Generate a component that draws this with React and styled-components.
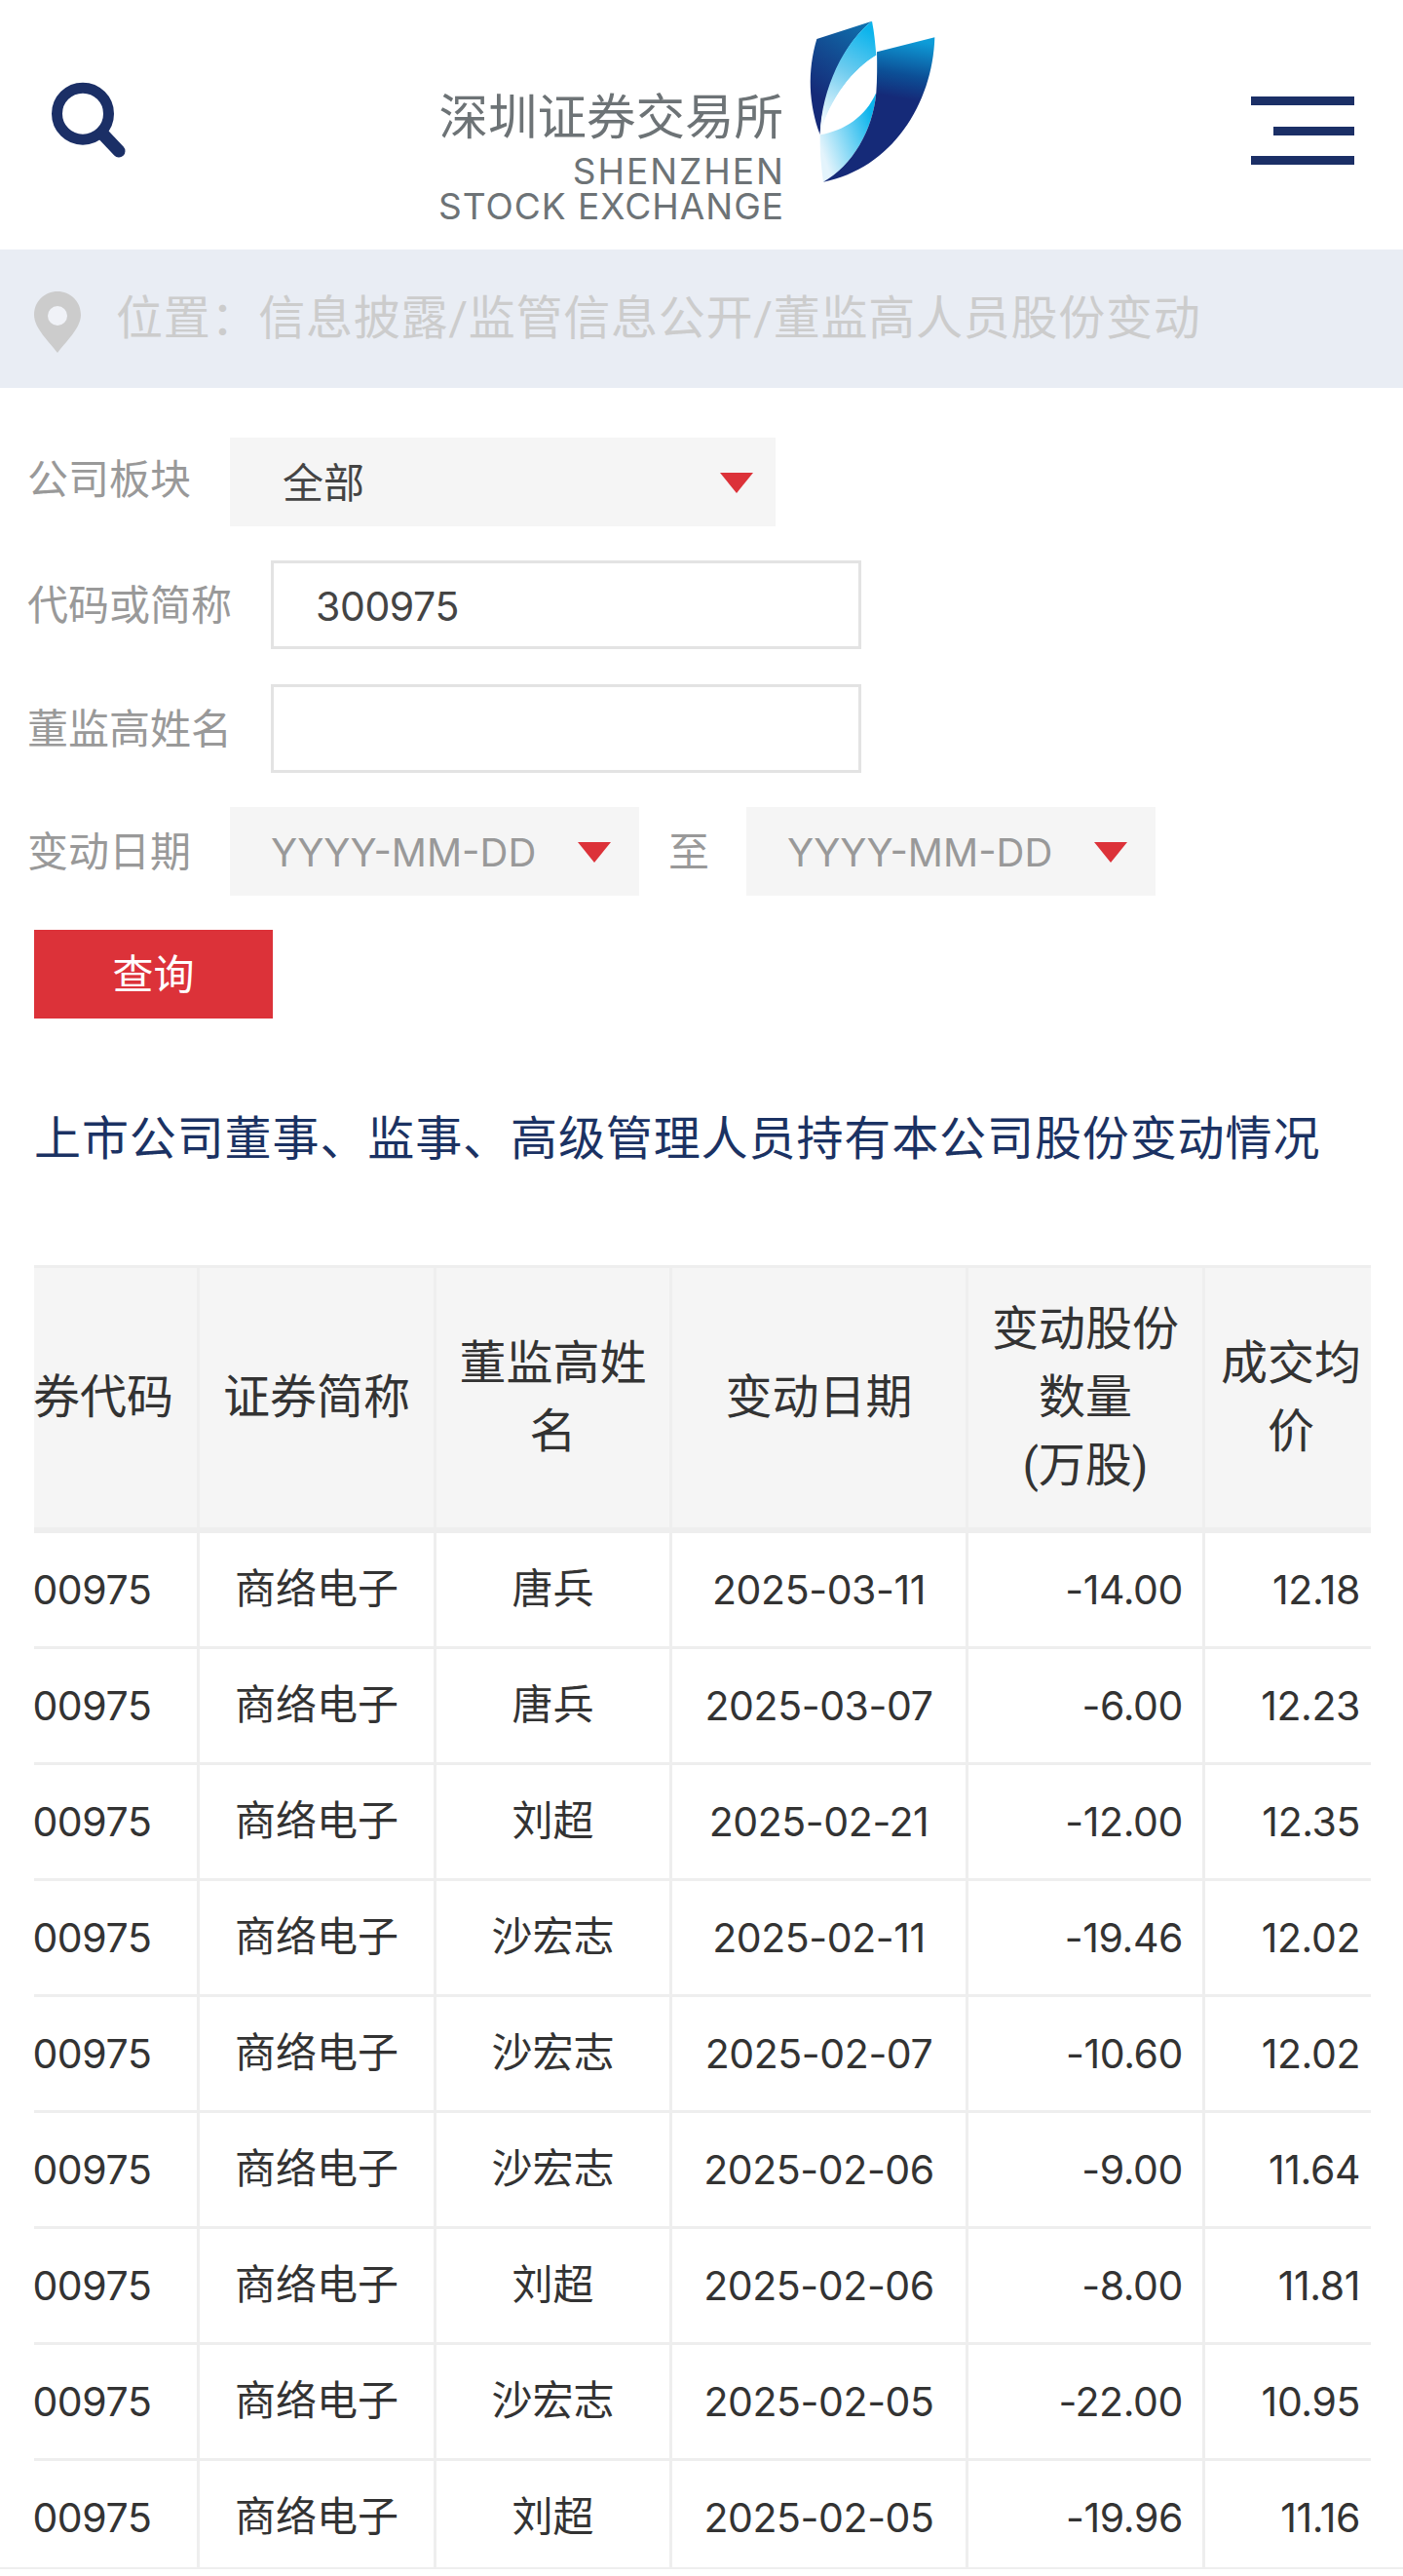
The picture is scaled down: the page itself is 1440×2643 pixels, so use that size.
import React from "react";
import styled, { createGlobalStyle } from "styled-components";

const FONT = `Roboto, "Noto Sans CJK SC", sans-serif`;
const NUM = `Inter, Roboto, sans-serif`;

const Global = createGlobalStyle`
  html, body { margin: 0; padding: 0; background: #fff; }
  body { font-family: ${FONT}; }
  * { box-sizing: border-box; }
`;

const Page = styled.div`
  width: 1440px;
  height: 2643px;
  background: #fff;
  overflow: hidden;
`;

const Header = styled.header`
  height: 256px;
  display: flex;
  align-items: flex-start;
  padding: 0 50px 0 45px;
`;

const SearchIcon = styled.svg`
  width: 90px;
  height: 90px;
  margin-top: 80px;
  flex: none;
`;

const Logo = styled.div`
  display: flex;
  align-items: flex-start;
  gap: 16px;
  margin: 10px 0 0 319px;
`;

const LogoText = styled.div`
  width: 350px;
  padding-top: 81px;
  display: flex;
  flex-direction: column;
  align-items: flex-end;
  color: #6d7376;
  white-space: nowrap;
`;

const LogoCn = styled.div`
  font: 400 50.5px/50px "Noto Sans CJK SC", sans-serif;
  margin-bottom: 17px;
`;

const LogoEn = styled.div`
  font: 400 37px/36px Inter, sans-serif;
  letter-spacing: ${(p) => p.$spacing}px;
  margin-right: -${(p) => p.$spacing}px;
`;

const Mark = styled.svg`
  width: 150px;
  height: 190px;
  flex: none;
`;

const Burger = styled.div`
  margin: 99px 0 0 auto;
  width: 106px;
  display: flex;
  flex-direction: column;
  align-items: flex-end;
  gap: 21.5px;
`;

const BurgerBar = styled.span`
  display: block;
  height: 9px;
  width: ${(p) => p.$width}px;
  background: #1b2f66;
`;

const Crumb = styled.nav`
  height: 142px;
  background: #e9edf4;
  display: flex;
  align-items: center;
  padding-left: 35px;
  gap: 36px;
  color: #cccccc;
  font-size: 48px;
  line-height: 60px;
  letter-spacing: 0.75px;
`;

const Pin = styled.svg`
  width: 48px;
  height: 63px;
  flex: none;
  margin-top: 7px;
`;

const Main = styled.main`
  height: 2238px;
  overflow: hidden;
  border-bottom: 2px solid #eeeeee;
`;

const Form = styled.div`
  padding: 51px 0 0 28px;
  display: flex;
  flex-direction: column;
  gap: 35.25px;
  align-items: flex-start;
`;

const Row = styled.div`
  display: flex;
  align-items: center;
  height: 91px;
`;

const Label = styled.label`
  font-size: 42px;
  line-height: 60px;
  color: #999999;
  margin-right: 40px;
  margin-top: ${(p) => (p.$lift ? 0 : 3)}px;
  margin-bottom: ${(p) => p.$lift || 0}px;
  white-space: nowrap;
`;

const Select = styled.div`
  position: relative;
  height: 91px;
  width: ${(p) => p.$width}px;
  background: #f5f5f5;
  padding-left: ${(p) => p.$pad}px;
  padding-top: ${(p) => (p.$placeholder ? 3 : 0)}px;
  padding-bottom: ${(p) => (p.$placeholder ? 0 : 5)}px;
  display: flex;
  align-items: center;
  font-family: ${(p) => (p.$placeholder ? NUM : FONT)};
  font-size: ${(p) => (p.$placeholder ? 40 : 42)}px;
  color: ${(p) => (p.$placeholder ? "#999999" : "#444444")};
`;

const Arrow = styled.span`
  position: absolute;
  right: ${(p) => p.$right}px;
  top: 36px;
  width: 0;
  height: 0;
  border-left: 17px solid transparent;
  border-right: 17px solid transparent;
  border-top: 21px solid #dc3239;
`;

const TextInput = styled.div`
  width: 606px;
  height: 91px;
  border: 3px solid #e3e3e3;
  background: #fff;
  padding: 3px 0 0 43px;
  display: flex;
  align-items: center;
  font-family: ${NUM};
  font-size: 41px;
  letter-spacing: -0.4px;
  color: #444444;
`;

const To = styled.span`
  margin: 3px 38px 0 30px;
  font-size: 42px;
  line-height: 60px;
  color: #999999;
`;

const Button = styled.button`
  width: 245px;
  height: 91px;
  margin-left: 7px;
  padding: 0 0 6px;
  border: 0;
  background: #dc3239;
  color: #fff;
  font-family: ${FONT};
  font-size: 42px;
`;

const Title = styled.h2`
  margin: 89px 0 94px 35px;
  font-size: 48px;
  line-height: 70px;
  font-weight: 400;
  letter-spacing: 0.9px;
  color: #1b3263;
  white-space: nowrap;
`;

const TableClip = styled.div`
  margin-left: 35px;
  width: 1372px;
  overflow: hidden;
`;

const Table = styled.table`
  table-layout: fixed;
  width: 1454px;
  margin-left: -73px;
  border-collapse: separate;
  border-spacing: 0;
`;

const HeadCell = styled.th`
  height: 275px;
  padding: 0 16px;
  background: #f5f5f5;
  border-top: 3px solid #eeeeee;
  border-bottom: 6px solid #eeeeee;
  border-right: 3px solid #eeeeee;
  font-size: 48px;
  line-height: 70px;
  font-weight: 400;
  color: #333333;
  text-align: center;
  vertical-align: middle;
  white-space: pre-line;
`;

const Cell = styled.td`
  height: 119px;
  padding: 0 ${(p) => (p.$right ? p.$right : 10)}px 0 10px;
  border-right: 3px solid #eeeeee;
  border-bottom: 3px solid #eeeeee;
  font-family: ${(p) => (p.$num ? NUM : FONT)};
  font-size: ${(p) => (p.$num ? 41 : 42)}px;
  letter-spacing: ${(p) => (p.$num ? -0.4 : 0)}px;
  line-height: 60px;
  color: #333333;
  text-align: ${(p) => (p.$right ? "right" : "center")};
  vertical-align: middle;
  white-space: nowrap;
`;

const widths = [243, 243, 242, 304, 243, 179];
const heads = ["证券代码", "证券简称", "董监高姓名", "变动日期", "变动股份\n数量\n(万股)", "成交均价"];
const rows = [
  ["唐兵", "2025-03-11", "-14.00", "12.18"],
  ["唐兵", "2025-03-07", "-6.00", "12.23"],
  ["刘超", "2025-02-21", "-12.00", "12.35"],
  ["沙宏志", "2025-02-11", "-19.46", "12.02"],
  ["沙宏志", "2025-02-07", "-10.60", "12.02"],
  ["沙宏志", "2025-02-06", "-9.00", "11.64"],
  ["刘超", "2025-02-06", "-8.00", "11.81"],
  ["沙宏志", "2025-02-05", "-22.00", "10.95"],
  ["刘超", "2025-02-05", "-19.96", "11.16"],
];

function LogoMark() {
  return (
    <Mark viewBox="0 0 450 570">
      <defs>
        <linearGradient id="lg-left" gradientUnits="userSpaceOnUse" x1="200" y1="40" x2="50" y2="260">
          <stop offset="0" stopColor="#0f70ad" />
          <stop offset="0.55" stopColor="#13488f" />
          <stop offset="1" stopColor="#152a78" />
        </linearGradient>
        <linearGradient id="lg-center" gradientUnits="userSpaceOnUse" x1="225" y1="70" x2="70" y2="340">
          <stop offset="0" stopColor="#0cb4ec" />
          <stop offset="0.45" stopColor="#6ccbef" />
          <stop offset="1" stopColor="#f2fafe" />
        </linearGradient>
        <linearGradient id="lg-low" gradientUnits="userSpaceOnUse" x1="65" y1="420" x2="235" y2="360">
          <stop offset="0" stopColor="#e4f4fc" />
          <stop offset="1" stopColor="#0cb4ec" />
        </linearGradient>
        <linearGradient id="lg-right" gradientUnits="userSpaceOnUse" x1="330" y1="90" x2="300" y2="270">
          <stop offset="0" stopColor="#0e9cd8" />
          <stop offset="0.6" stopColor="#0c4f96" />
          <stop offset="1" stopColor="#152a78" />
        </linearGradient>
      </defs>
      <path d="M55 90 L225 35 C150 90 75 230 65 385 C30 290 25 190 55 90 Z" fill="url(#lg-left)" />
      <path d="M225 35 C232 70 235 105 238 140 C170 180 95 270 65 385 C70 240 140 100 225 35 Z" fill="url(#lg-center)" />
      <path d="M65 385 C95 270 170 180 238 140 C240 180 240 220 238 255 C205 330 140 372 65 385 Z" fill="#ffffff" />
      <path d="M65 385 C140 372 205 330 238 255 C228 370 165 480 75 530 C68 480 64 430 65 385 Z" fill="url(#lg-low)" />
      <path d="M240 130 L418 85 C412 290 285 490 75 530 C165 480 228 370 238 255 C241 215 241 170 240 130 Z" fill="url(#lg-right)" />
    </Mark>
  );
}

export default function App() {
  return (
    <Page>
      <Global />
      <Header>
        <SearchIcon viewBox="0 0 90 90">
          <circle cx="40" cy="36.7" r="26.5" fill="none" stroke="#1b2f66" strokeWidth="11" />
          <line x1="60" y1="57" x2="77" y2="75" stroke="#1b2f66" strokeWidth="13" strokeLinecap="round" />
        </SearchIcon>
        <Logo>
          <LogoText>
            <LogoCn>深圳证券交易所</LogoCn>
            <LogoEn $spacing={2}>SHENZHEN</LogoEn>
            <LogoEn $spacing={1}>STOCK EXCHANGE</LogoEn>
          </LogoText>
          <LogoMark />
        </Logo>
        <Burger>
          <BurgerBar $width={106} />
          <BurgerBar $width={83} />
          <BurgerBar $width={106} />
        </Burger>
      </Header>
      <Crumb>
        <Pin viewBox="0 0 48 63">
          <path d="M24 0 C37 0 48 10 48 24 C48 38 32 52 24 63 C16 52 0 38 0 24 C0 10 11 0 24 0 Z" fill="#cccccc" />
          <circle cx="24" cy="25" r="10" fill="#f0f2f7" />
        </Pin>
        <span>位置：信息披露/监管信息公开/董监高人员股份变动</span>
      </Crumb>
      <Main>
        <Form>
          <Row>
            <Label $lift={4}>公司板块</Label>
            <Select $width={560} $pad={54}>
              全部
              <Arrow $right={23} />
            </Select>
          </Row>
          <Row>
            <Label>代码或简称</Label>
            <TextInput>300975</TextInput>
          </Row>
          <Row>
            <Label>董监高姓名</Label>
            <TextInput />
          </Row>
          <Row>
            <Label>变动日期</Label>
            <Select $width={420} $pad={42} $placeholder>
              YYYY-MM-DD
              <Arrow $right={29} />
            </Select>
            <To>至</To>
            <Select $width={420} $pad={42} $placeholder>
              YYYY-MM-DD
              <Arrow $right={29} />
            </Select>
          </Row>
          <Button>查询</Button>
        </Form>
        <Title>上市公司董事、监事、高级管理人员持有本公司股份变动情况</Title>
        <TableClip>
          <Table>
            <colgroup>
              {widths.map((w, i) => (
                <col key={i} style={{ width: w }} />
              ))}
            </colgroup>
            <thead>
              <tr>
                {heads.map((h) => (
                  <HeadCell key={h}>{h}</HeadCell>
                ))}
              </tr>
            </thead>
            <tbody>
              {rows.map((r, i) => (
                <tr key={i}>
                  <Cell $num>300975</Cell>
                  <Cell>商络电子</Cell>
                  <Cell>{r[0]}</Cell>
                  <Cell $num>{r[1]}</Cell>
                  <Cell $num $right={20}>{r[2]}</Cell>
                  <Cell $num $right={17}>{r[3]}</Cell>
                </tr>
              ))}
            </tbody>
          </Table>
        </TableClip>
      </Main>
    </Page>
  );
}
